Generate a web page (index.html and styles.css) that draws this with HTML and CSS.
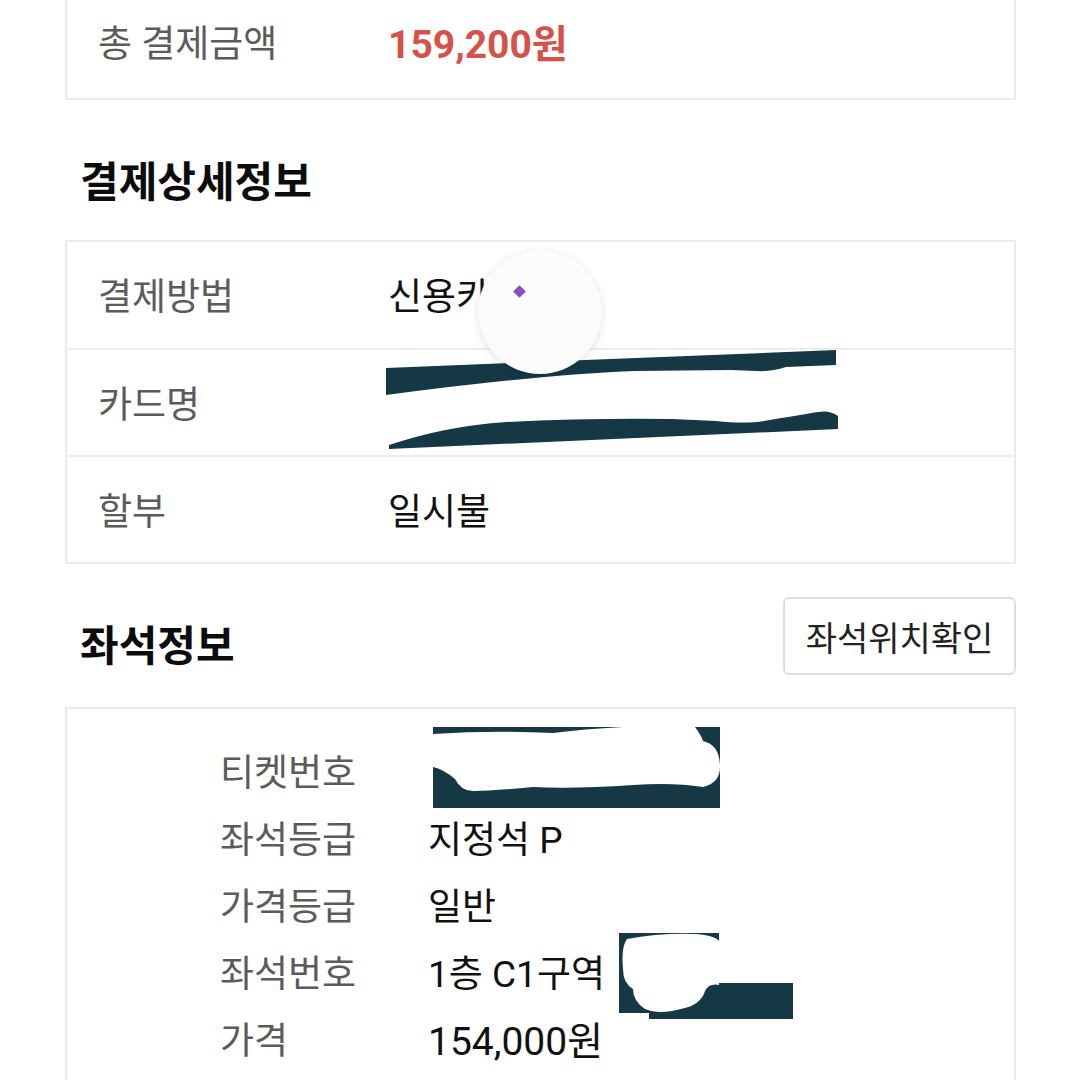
FILE: index.html
```html
<!DOCTYPE html>
<html lang="ko">
<head>
<meta charset="utf-8">
<link rel="stylesheet" href="styles.css">
</head>
<body>
<div class="page">
  <div class="card total">
    <div class="row-total">
      <span class="label">총 결제금액</span>
      <span class="amount">159,200원</span>
    </div>
  </div>

  <h2 class="heading first">결제상세정보</h2>

  <div class="card detail">
    <div class="drow"><span class="label">결제방법</span><span class="value">신용카드</span></div>
    <div class="drow"><span class="label">카드명</span><span class="value"></span></div>
    <div class="drow"><span class="label">할부</span><span class="value">일시불</span></div>
  </div>

  <div class="section-head">
    <h2 class="heading">좌석정보</h2>
    <button class="seat-btn">좌석위치확인</button>
  </div>

  <div class="card seat">
    <div class="grid">
      <span class="label">티켓번호</span><span class="value"></span>
      <span class="label">좌석등급</span><span class="value">지정석 P</span>
      <span class="label">가격등급</span><span class="value">일반</span>
      <span class="label">좌석번호</span><span class="value">1층 C1구역</span>
      <span class="label">가격</span><span class="value num">154,000원</span>
    </div>
  </div>

  <svg class="redact r-card" width="460" height="110" viewBox="0 0 460 110">
    <path d="M0 18 L450 0 L450 15 L400 17 Q385 22 370 21 L345 20 L250 21 Q160 24 0 45 Z" fill="#163845"/>
    <path d="M3 95 Q60 76 120 72 Q200 68 286 69 L330 71 Q360 74 378 71 Q420 64 432 62 Q444 60 452 66 L452 79 L3 99 Z" fill="#163845"/>
  </svg>

  <svg class="redact r-ticket" width="288" height="82" viewBox="0 0 288 82">
    <rect x="0" y="0" width="287" height="81" fill="#163845"/>
    <path d="M0 7 Q60 3 120 6 Q150 2 190 0 L262 0 Q268 8 270 14 Q287 18 287 40 Q287 56 270 60 Q240 55 200 58 Q140 62 100 60 Q60 64 40 64 Q28 64 22 52 Q10 42 0 40 Z" fill="#ffffff"/>
  </svg>

  <svg class="redact r-seat" width="176" height="88" viewBox="0 0 176 88">
    <path d="M0 0 L100 0 L100 50 L174 50 L174 86 L30 86 L30 80 L0 80 Z" fill="#163845"/>
    <path d="M8 6 Q40 0 75 1 Q95 2 100 8 L100 52 Q90 50 86 58 Q82 72 62 76 Q40 82 26 76 Q14 68 14 56 Q4 50 4 36 Q2 14 8 6 Z" fill="#ffffff"/>
  </svg>

  <div class="touch"><span class="dot"></span></div>
</div>
</body>
</html>
```

FILE: styles.css
```css
html, body {
  margin: 0;
  padding: 0;
  background: #ffffff;
}

body {
  font-family: "Roboto", "Noto Sans CJK KR", sans-serif;
  font-size: 37px;
  color: #111111;
}

.page {
  position: relative;
  padding: 0 64px 0 65px;
  height: 1080px;
  overflow: hidden;
}

.card {
  border: 2px solid #ebebeb;
  background: #ffffff;
}

.card.total {
  border-top: none;
}

.row-total {
  display: flex;
  align-items: center;
  height: 98px;
  padding: 0 0 16px 31px;
  box-sizing: border-box;
}

.label {
  color: #5b5b5b;
}

.value {
  color: #111111;
}

.num {
  font-size: 39px;
}

.row-total .label {
  width: 290px;
}

.amount {
  color: #d4524a;
  font-weight: 700;
  font-size: 39px;
}

.heading {
  margin: 0;
  font-size: 42px;
  font-weight: 700;
  line-height: 48px;
  color: #0c0c0c;
  padding-left: 15px;
}

.heading.first {
  margin: 59px 0 33px;
}

.drow {
  display: flex;
  align-items: center;
  height: 107px;
  padding: 0 0 2px 31px;
  box-sizing: border-box;
  border-top: 2px solid #ededed;
}

.drow:first-child {
  border-top: none;
  height: 106px;
}

.drow .label {
  width: 290px;
}

.section-head {
  display: flex;
  justify-content: space-between;
  align-items: flex-end;
  margin-top: 33px;
  height: 78px;
}

.section-head .heading {
  margin-bottom: 4px;
}

.seat-btn {
  font-family: "Roboto", "Noto Sans CJK KR", sans-serif;
  font-size: 34px;
  color: #222222;
  background: #ffffff;
  border: 2px solid #dddddd;
  border-radius: 6px;
  width: 233px;
  height: 78px;
  padding: 0;
}

.card.seat {
  margin-top: 32px;
  padding: 27px 0 40px 153px;
}

.grid {
  display: grid;
  grid-template-columns: 208px 1fr;
  grid-auto-rows: 67px;
  align-items: center;
}

.redact {
  position: absolute;
  display: block;
}

.r-card {
  left: 386px;
  top: 350px;
}

.r-ticket {
  left: 433px;
  top: 727px;
}

.r-seat {
  left: 619px;
  top: 933px;
}

.touch {
  position: absolute;
  left: 478px;
  top: 250px;
  width: 124px;
  height: 124px;
  border-radius: 50%;
  background: #fcfbfc;
  box-shadow: 0 2px 8px rgba(0, 0, 0, 0.12);
}

.dot {
  position: absolute;
  left: 37px;
  top: 37px;
  width: 9px;
  height: 9px;
  background: #8450c4;
  transform: rotate(45deg);
}
```
